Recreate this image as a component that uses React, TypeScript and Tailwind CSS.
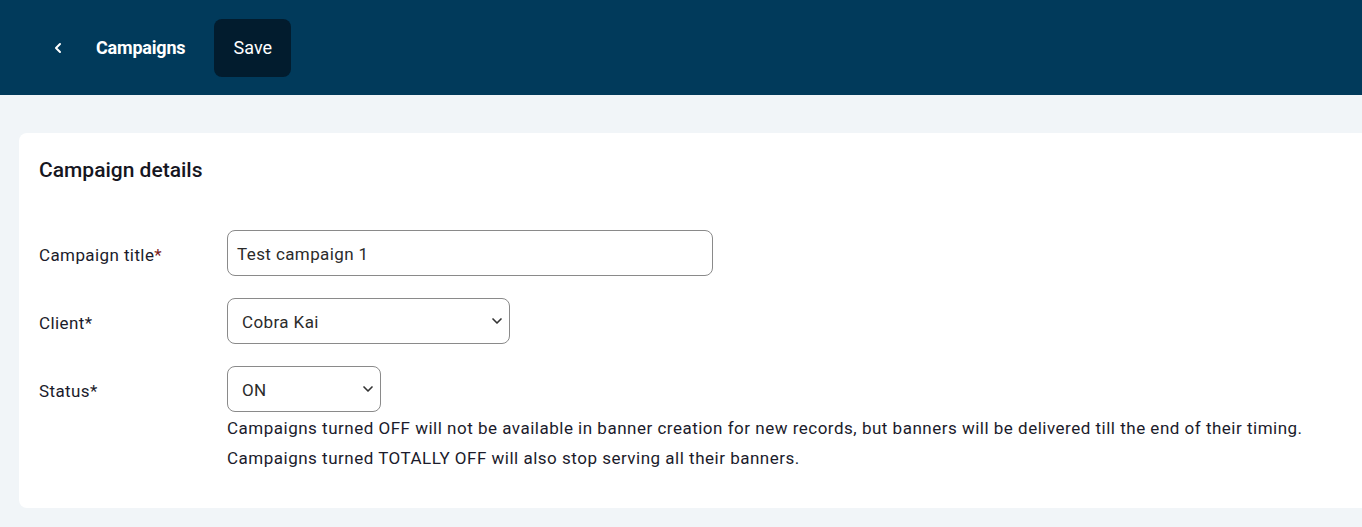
import React from 'react';
import { ChevronLeft, ChevronDown } from 'lucide-react';

const font = { fontFamily: 'Roboto, "Noto Sans", sans-serif' };

const Field: React.FC<{ label: string; star?: string; children: React.ReactNode }> = ({ label, star = 'text-[#1b1b2b]', children }) => (
  <div className="flex items-start">
    <label className="w-[188px] shrink-0 pt-[13px] text-[17px] tracking-[0.4px] text-[#1b1b2b]">
      {label}
      <span className={star}>*</span>
    </label>
    <div>{children}</div>
  </div>
);

const Select: React.FC<{ value: string; width: string }> = ({ value, width }) => (
  <div className={`flex h-[46px] items-center justify-between rounded-lg border border-[#8a8a8a] bg-white pl-[14px] pr-[4px] text-[17px] tracking-[0.4px] text-[#2b2b2b] ${width}`}>
    <span className="pt-[4px]">{value}</span>
    <ChevronDown className="h-4 w-4 text-[#333]" strokeWidth={2.5} />
  </div>
);

export default function App() {
  return (
    <div className="h-[527px] w-[1362px] overflow-hidden bg-[#f1f5f8]" style={font}>
      <header className="flex h-[95px] items-center bg-[#013a5b] pl-[50px] text-white">
        <ChevronLeft className="h-4 w-4" strokeWidth={3} />
        <span className="ml-[30px] text-[18px] font-bold tracking-[-0.2px]">Campaigns</span>
        <button className="ml-[29px] h-[58px] w-[77px] rounded-lg bg-[#021c2e] text-[18px]">Save</button>
      </header>

      <main className="pl-[19px] pt-[38px]">
        <section className="h-[375px] w-[1380px] rounded-lg bg-white pl-[20px] pt-[22px]">
          <h2 className="text-[21px] font-medium text-[#16161f]">Campaign details</h2>

          <div className="mt-[43px] flex flex-col gap-[22px]">
            <Field label="Campaign title" star="text-[#7a2020]">
              <div className="flex h-[46px] w-[486px] items-center rounded-lg border border-[#8a8a8a] bg-white px-[9px] pt-[4px] text-[17px] tracking-[0.4px] text-[#2b2b2b]">
                Test campaign 1
              </div>
            </Field>
            <Field label="Client">
              <Select value="Cobra Kai" width="w-[283px]" />
            </Field>
            <Field label="Status">
              <div>
                <Select value="ON" width="w-[154px]" />
                <p className="mt-px text-[17px] leading-[30px] tracking-[0.5px] text-[#1b1b2b]">
                  Campaigns turned OFF will not be available in banner creation for new records, but banners will be delivered till the end of their timing.
                  <br />
                  Campaigns turned TOTALLY OFF will also stop serving all their banners.
                </p>
              </div>
            </Field>
          </div>
        </section>
      </main>
    </div>
  );
}
